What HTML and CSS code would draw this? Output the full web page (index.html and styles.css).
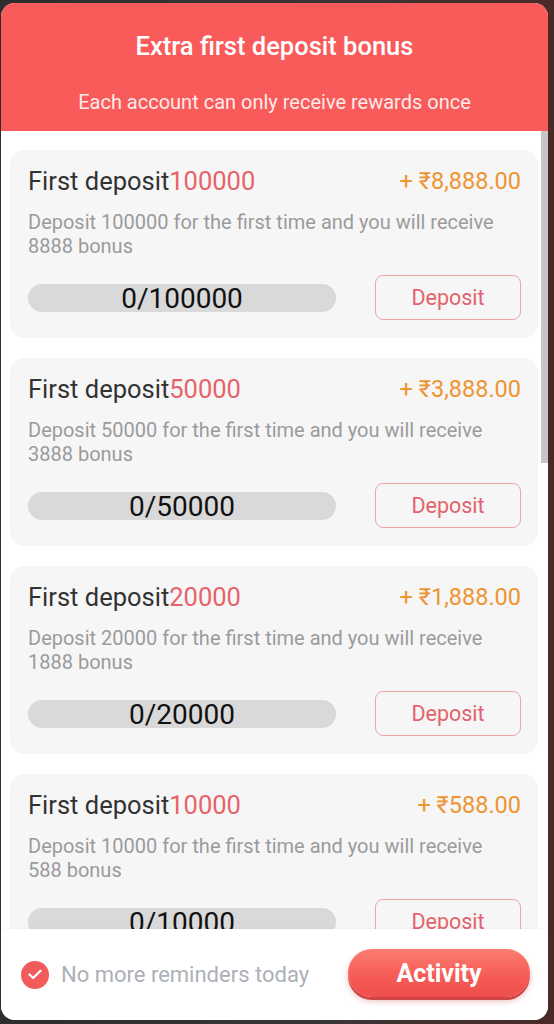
FILE: index.html
```html
<!DOCTYPE html>
<html lang="en">
<head>
<meta charset="utf-8">
<title>Extra first deposit bonus</title>
<link rel="stylesheet" href="styles.css">
</head>
<body>
<div class="modal">
  <header class="head">
    <h1 class="head-title">Extra first deposit bonus</h1>
    <p class="head-sub">Each account can only receive rewards once</p>
  </header>
  <div class="body">
    <div class="list">
      <div class="card">
        <div class="card-top">
          <div class="card-title">First deposit<span class="hl">100000</span></div>
          <div class="card-amount">+ ₹8,888.00</div>
        </div>
        <div class="card-desc">Deposit 100000 for the first time and you will receive 8888 bonus</div>
        <div class="card-bottom">
          <div class="bar">0/100000</div>
          <button class="dep-btn">Deposit</button>
        </div>
      </div>
      <div class="card">
        <div class="card-top">
          <div class="card-title">First deposit<span class="hl">50000</span></div>
          <div class="card-amount">+ ₹3,888.00</div>
        </div>
        <div class="card-desc">Deposit 50000 for the first time and you will receive 3888 bonus</div>
        <div class="card-bottom">
          <div class="bar">0/50000</div>
          <button class="dep-btn">Deposit</button>
        </div>
      </div>
      <div class="card">
        <div class="card-top">
          <div class="card-title">First deposit<span class="hl">20000</span></div>
          <div class="card-amount">+ ₹1,888.00</div>
        </div>
        <div class="card-desc">Deposit 20000 for the first time and you will receive 1888 bonus</div>
        <div class="card-bottom">
          <div class="bar">0/20000</div>
          <button class="dep-btn">Deposit</button>
        </div>
      </div>
      <div class="card">
        <div class="card-top">
          <div class="card-title">First deposit<span class="hl">10000</span></div>
          <div class="card-amount">+ ₹588.00</div>
        </div>
        <div class="card-desc">Deposit 10000 for the first time and you will receive 588 bonus</div>
        <div class="card-bottom">
          <div class="bar">0/10000</div>
          <button class="dep-btn">Deposit</button>
        </div>
      </div>
    </div>
    <div class="track"><div class="thumb"></div></div>
  </div>
  <footer class="foot">
    <label class="remind">
      <span class="check">
        <svg width="14" height="11" viewBox="0 0 14 11"><path d="M1.5 5.5 L5.2 9 L12.5 1.8" fill="none" stroke="#fff" stroke-width="2.2" stroke-linecap="round" stroke-linejoin="round"/></svg>
      </span>
      <span class="remind-text">No more reminders today</span>
    </label>
    <button class="act-btn">Activity</button>
  </footer>
</div>
</body>
</html>
```

FILE: styles.css
```css
html, body {
  margin: 0;
  padding: 0;
}
body {
  width: 554px;
  height: 1024px;
  overflow: hidden;
  background: linear-gradient(90deg, #2e2c2c 0%, #3a3636 60%, #4a2a26 100%);
  font-family: Roboto, "Noto Sans", "Liberation Sans", sans-serif;
}
.modal {
  margin: 3px 6px 0 1px;
  width: 547px;
  height: 1017px;
  border-radius: 14px;
  overflow: hidden;
  background: #fff;
  display: flex;
  flex-direction: column;
}
.head {
  height: 128px;
  flex: none;
  background: #f95a5a;
  color: #fff;
  text-align: center;
  box-sizing: border-box;
  padding-top: 27px;
}
.head-title {
  margin: 0;
  font-size: 25.5px;
  font-weight: 500;
  line-height: 32px;
}
.head-sub {
  margin: 26px 0 0;
  font-size: 20px;
  font-weight: 400;
  line-height: 28px;
  color: #fdeaea;
}
.body {
  height: 798px;
  flex: none;
  display: flex;
  overflow: hidden;
}
.list {
  flex: 1;
  padding: 19px 3px 0 9px;
  display: flex;
  flex-direction: column;
  gap: 20px;
}
.track {
  width: 7px;
  flex: none;
  background: #fff;
}
.thumb {
  height: 332px;
  background: #c6c6c6;
}
.card {
  flex: none;
  background: #f6f6f6;
  border-radius: 14px;
  padding: 15px 17px 18px 18px;
}
.card-top {
  display: flex;
  justify-content: space-between;
  align-items: center;
  height: 32px;
}
.card-title {
  font-size: 25.5px;
  color: #333;
  line-height: 32px;
}
.hl {
  color: #e5636a;
}
.card-amount {
  font-size: 23.5px;
  color: #ee9432;
  line-height: 32px;
}
.card-desc {
  margin-top: 13px;
  max-width: 490px;
  font-size: 20px;
  line-height: 24px;
  color: #9b9b9b;
  height: 48px;
}
.card-bottom {
  margin-top: 17px;
  display: flex;
  align-items: center;
  justify-content: space-between;
  height: 45px;
}
.bar {
  width: 308px;
  height: 28px;
  border-radius: 14px;
  background: #d9d9d9;
  color: #111;
  font-size: 28px;
  line-height: 29px;
  text-align: center;
}
.dep-btn {
  width: 146px;
  height: 45px;
  box-sizing: border-box;
  border: 1px solid #eaa6a8;
  border-radius: 8px;
  background: transparent;
  color: #e2646a;
  font-family: inherit;
  font-size: 21.5px;
  padding: 0;
}
.foot {
  flex: 1;
  background: #fff;
  display: flex;
  align-items: center;
  justify-content: space-between;
  padding: 0 18px 0 20px;
  box-shadow: 0 -1px 2px rgba(0,0,0,0.04);
  position: relative;
}
.remind {
  display: flex;
  align-items: center;
  gap: 12px;
}
.check {
  width: 28px;
  height: 28px;
  border-radius: 50%;
  background: #f25b5b;
  display: flex;
  align-items: center;
  justify-content: center;
}
.remind-text {
  font-size: 22px;
  color: #acb0b7;
}
.act-btn {
  width: 182px;
  height: 48px;
  border: none;
  border-radius: 24px;
  background: linear-gradient(180deg, #fd7d70 0%, #f55a55 60%, #ef4e4e 100%);
  box-shadow: 0 3px 0 #cf4444, 0 4px 6px rgba(200,60,60,0.35);
  color: #fff;
  font-family: inherit;
  font-size: 25px;
  font-weight: 700;
  padding: 0;
  margin-top: -3px;
}
```
